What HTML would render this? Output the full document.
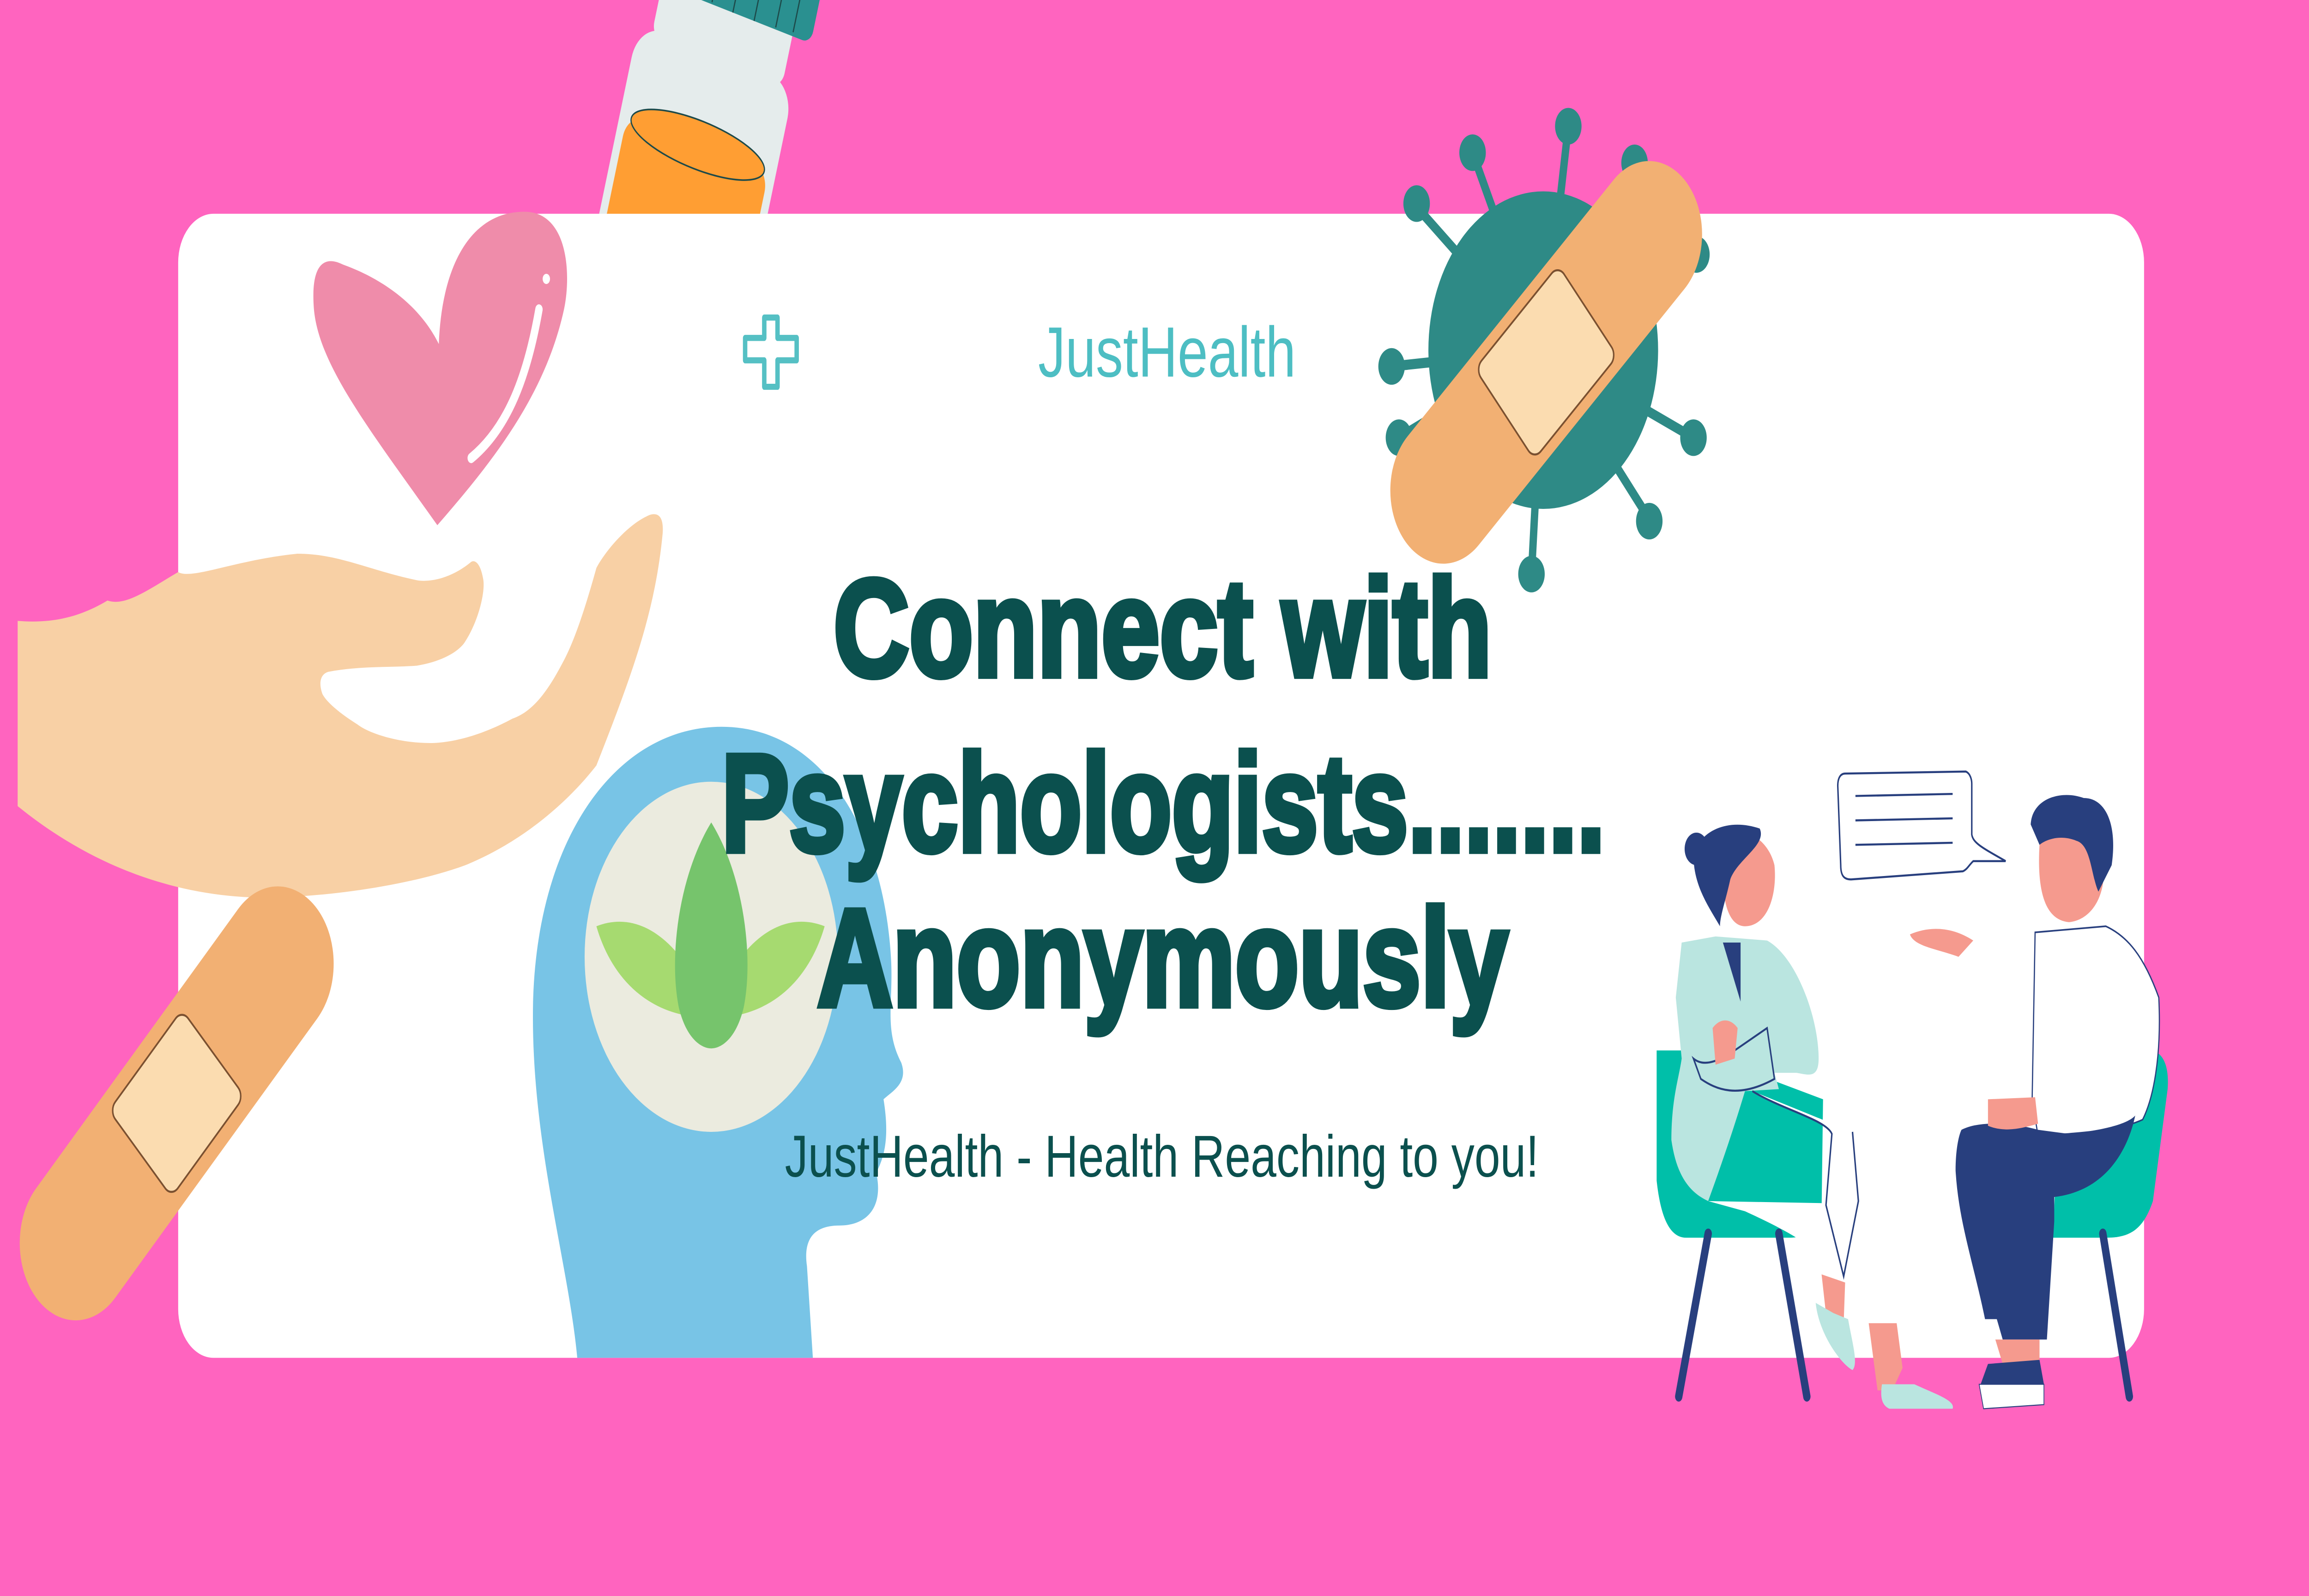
<!DOCTYPE html>
<html><head><style>html,body{margin:0;padding:0;background:#ff64bf;width:100%;height:100%;overflow:hidden}svg{display:block;position:absolute;left:0;top:0;width:100vw;height:100vh}</style></head>
<body>
<svg viewBox="0 0 1568 784" preserveAspectRatio="none" xmlns="http://www.w3.org/2000/svg">
<rect width="1568" height="784" fill="#ff64bf"/>
<g transform="translate(8,14) rotate(16 465 60)">
<rect x="410" y="10" width="110" height="140" rx="18" fill="#e5ecec"/>
<rect x="420" y="-25" width="92" height="40" rx="8" fill="#e5ecec"/>
<rect x="425" y="-42" width="100" height="30" rx="6" fill="#2a9090"/>
<g stroke="#1d4a4a" stroke-width="0.8"><line x1="440" y1="-40" x2="440" y2="-14"/><line x1="455" y1="-40" x2="455" y2="-13"/><line x1="470" y1="-40" x2="470" y2="-12"/><line x1="485" y1="-40" x2="485" y2="-12"/><line x1="500" y1="-40" x2="500" y2="-13"/><line x1="512" y1="-40" x2="512" y2="-14"/></g>
<rect x="415" y="55" width="100" height="70" rx="12" fill="#ff9e33"/>
<ellipse cx="465" cy="57" rx="47" ry="12" fill="#ff9e33" stroke="#1d4a4a" stroke-width="0.8"/>
</g>
<rect x="121" y="105" width="1335" height="562" rx="24" fill="#fff"/>
<path d="M297,258 C250,210 215,178 213,150 C211,125 225,127 233,130 C260,137 285,150 298,169 C300,130 320,104 356,104 C386,104 388,135 383,152 C370,195 333,228 297,258Z" fill="#ef8caa"/>
<path d="M366,152 C358,185 345,210 320,225" stroke="#fff" stroke-width="5" fill="none" stroke-linecap="round"/>
<circle cx="371" cy="137" r="2.5" fill="#fff"/>
<path d="M12,305 L12,396 C70,430 130,441 182,441 C240,440 290,432 316,425 C360,412 390,390 405,376 C430,330 445,300 450,262 C451,252 445,252 441,253 C425,258 410,272 405,279 C395,305 388,318 381,327 C370,342 360,350 348,353 C325,362 305,365 292,365 C270,365 250,360 243,356 C230,350 222,345 219,341 C216,335 218,331 223,330 C245,327 265,328 283,327 C300,325 312,320 316,315 C325,305 330,290 328,284 C326,276 322,275 320,276 C305,285 290,286 283,285 C250,280 230,272 202,272 C160,275 130,285 121,281 C100,290 85,298 73,295 C50,305 30,306 12,305Z" fill="#f8d0a5"/>
<g transform="translate(120,542) rotate(-45)">
<rect x="-135" y="-38" width="270" height="76" rx="38" fill="#f2b073"/>
<rect x="-35" y="-30" width="70" height="60" rx="6" fill="#fbdcb0" stroke="#7a5030" stroke-width="1"/>
</g>
<path d="M392,667 C386,620 360,560 362,492 C365,410 420,357 490,357 C560,357 600,410 605,470 C607,492 600,505 612,522 C617,532 606,536 600,540 C604,558 601,568 595,576 C600,592 590,602 570,602 C555,602 545,607 548,622 L552,667Z" fill="#78c4e6"/>
<ellipse cx="483" cy="470" rx="86" ry="86" fill="#ebebdf"/>
<path d="M405,455 C440,445 470,470 483,500 C440,500 415,480 405,455Z" fill="#a6da70"/>
<path d="M560,455 C525,445 495,470 483,500 C525,500 550,480 560,455Z" fill="#a6da70"/>
<path d="M483,404 C505,430 512,470 505,495 C500,510 490,515 483,515 C476,515 466,510 461,495 C454,470 461,430 483,404Z" fill="#76c46c"/>
<g fill="#2e8a86">
<circle cx="1048" cy="172" r="78"/>
<g stroke="#2e8a86" stroke-width="5">
<line x1="1048" y1="172" x2="1065" y2="62"/><line x1="1048" y1="172" x2="1000" y2="75"/><line x1="1048" y1="172" x2="960" y2="100"/><line x1="1048" y1="172" x2="945" y2="180"/><line x1="1048" y1="172" x2="950" y2="215"/><line x1="1048" y1="172" x2="1150" y2="125"/><line x1="1048" y1="172" x2="1150" y2="215"/><line x1="1048" y1="172" x2="1120" y2="255"/><line x1="1048" y1="172" x2="1040" y2="282"/><line x1="1048" y1="172" x2="1110" y2="80"/>
</g>
<circle cx="1065" cy="62" r="9"/><circle cx="1000" cy="75" r="9"/><circle cx="962" cy="100" r="9"/><circle cx="945" cy="180" r="9"/><circle cx="950" cy="215" r="9"/><circle cx="1152" cy="125" r="9"/><circle cx="1150" cy="215" r="9"/><circle cx="1120" cy="256" r="9"/><circle cx="1040" cy="282" r="9"/><circle cx="1110" cy="80" r="9"/>
</g>
<g transform="translate(1050,178) rotate(-42)">
<rect x="-130" y="-36" width="260" height="72" rx="36" fill="#f2b073"/>
<rect x="-38" y="-30" width="76" height="60" rx="6" fill="#fbdcb0" stroke="#7a5030" stroke-width="1"/>
</g>
<path d="M519,156 h9 v10 h13 v11 h-13 v13 h-9 v-13 h-13 v-11 h13z" fill="none" stroke="#55c0c4" stroke-width="3" stroke-linejoin="round"/>
<text x="705" y="185" font-family="Liberation Sans, sans-serif" font-size="35" fill="#4dbec3" textLength="175" lengthAdjust="spacingAndGlyphs">JustHealth</text>
<g font-family="Liberation Sans, sans-serif" font-weight="bold" font-size="68" fill="#0b504e" stroke="#0b504e" stroke-width="3">
<text x="566" y="332" textLength="447" lengthAdjust="spacingAndGlyphs">Connect with</text>
<text x="490" y="418" textLength="600" lengthAdjust="spacingAndGlyphs">Psychologists.......</text>
<text x="555" y="494" textLength="469" lengthAdjust="spacingAndGlyphs">Anonymously</text>
</g>
<text x="533" y="578" font-family="Liberation Sans, sans-serif" font-size="29" fill="#0b504e" textLength="512" lengthAdjust="spacingAndGlyphs">JustHealth - Health Reaching to you!</text>
<path d="M1125,516 L1150,516 L1238,540 L1237,595 C1235,605 1225,608 1215,608 L1145,608 C1135,608 1128,600 1125,580 Z" fill="#00bfa9"/>
<path d="M1160,606 L1140,686" stroke="#283f7e" stroke-width="5" stroke-linecap="round"/>
<path d="M1208,606 L1227,686" stroke="#283f7e" stroke-width="5" stroke-linecap="round"/>
<path d="M1400,516 L1462,516 C1470,518 1473,525 1472,535 L1462,590 C1455,605 1445,608 1430,608 L1394,608 Z" fill="#00bfa9"/>
<path d="M1428,606 L1446,686" stroke="#283f7e" stroke-width="5" stroke-linecap="round"/>
<path d="M1142,463 L1165,460 L1200,462 C1220,470 1235,500 1235,520 C1235,530 1228,528 1220,527 L1205,527 L1208,535 L1185,536 C1175,560 1165,580 1160,590 C1145,585 1138,575 1135,560 C1135,540 1140,530 1142,520 L1138,490Z" fill="#bae5e0"/>
<path d="M1160,590 L1237,591 L1245,600 L1252,634 L1237,645 L1240,620 C1230,610 1200,600 1185,595Z" fill="#fff"/>
<path d="M1190,536 C1210,545 1240,550 1244,557 L1240,592 L1252,627 L1262,590 L1258,556" fill="#fff" stroke="#283f7e" stroke-width="1"/>
<path d="M1237,626 L1253,630 L1252,650 L1241,652Z" fill="#f59a8e"/>
<path d="M1233,640 C1235,655 1250,670 1258,673 C1262,670 1258,660 1255,648 L1245,645Z" fill="#bae5e0"/>
<path d="M1269,650 L1288,650 L1292,672 L1285,683 L1275,683Z" fill="#f59a8e"/>
<path d="M1278,680 L1300,680 C1315,685 1328,688 1326,692 L1283,692 C1277,690 1277,685 1278,680Z" fill="#bae5e0"/>
<path d="M1170,410 C1180,405 1200,410 1205,425 C1207,440 1200,455 1185,455 C1175,455 1170,445 1170,430Z" fill="#f59a8e"/>
<path d="M1150,420 C1155,407 1175,402 1195,407 C1200,415 1180,422 1175,432 C1172,442 1168,450 1168,455 C1160,445 1150,435 1150,420Z" fill="#283f7e"/>
<circle cx="1152" cy="417" r="8" fill="#283f7e"/>
<path d="M1170,463 L1182,492 L1182,463Z" fill="#283f7e"/>
<path d="M1150,520 C1158,525 1170,520 1180,515 L1200,505 L1205,530 C1180,540 1165,535 1155,530Z" fill="#bae5e0" stroke="#283f7e" stroke-width="1"/>
<path d="M1163,505 C1168,500 1175,500 1180,505 L1178,520 L1165,523Z" fill="#f59a8e"/>
<path d="M1382,458 L1430,455 C1445,460 1456,470 1466,490 C1468,520 1462,540 1455,550 C1440,555 1420,556 1405,557 L1384,558 L1380,540 Z" fill="#fff" stroke="#283f7e" stroke-width="0.8"/>
<path d="M1332,555 C1345,550 1370,552 1384,555 L1405,557 C1430,555 1445,552 1450,548 C1445,565 1430,585 1395,588 L1395,600 L1390,658 L1360,658 L1356,648 L1348,648 C1340,620 1330,600 1328,575 C1328,565 1330,558 1332,555Z" fill="#283f7e"/>
<path d="M1350,540 L1382,539 L1384,552 C1370,555 1360,556 1350,553Z" fill="#f59a8e"/>
<path d="M1355,658 L1385,658 L1385,670 L1360,670Z" fill="#f59a8e"/>
<path d="M1350,670 L1385,668 L1388,680 L1345,680Z" fill="#283f7e"/>
<path d="M1344,680 L1388,680 L1388,690 L1347,692Z" fill="#fff" stroke="#283f7e" stroke-width="0.5"/>
<path d="M1385,415 C1392,405 1420,405 1428,420 C1432,440 1420,452 1405,453 C1390,452 1383,440 1385,415Z" fill="#f59a8e"/>
<path d="M1379,405 C1380,392 1400,388 1415,392 C1430,392 1438,405 1434,425 L1425,438 C1420,430 1420,415 1410,413 C1400,410 1390,412 1385,415Z" fill="#283f7e"/>
<path d="M1297,459 C1310,455 1325,455 1340,462 L1330,470 C1315,466 1300,465 1297,459Z" fill="#f59a8e"/>
<path d="M1253,380 L1335,379 C1338,380 1339,383 1339,385 L1339,410 C1340,414 1345,416 1362,423 L1340,423 C1337,425 1336,427 1333,428 L1257,432 C1252,432 1250,430 1250,425 L1248,386 C1248,382 1250,380 1253,380Z" fill="#fff" stroke="#283f7e" stroke-width="1"/>
<g stroke="#283f7e" stroke-width="1"><line x1="1260" y1="391" x2="1326" y2="390"/><line x1="1260" y1="403" x2="1326" y2="402"/><line x1="1260" y1="415" x2="1326" y2="414"/></g>
</svg>
</body></html>
